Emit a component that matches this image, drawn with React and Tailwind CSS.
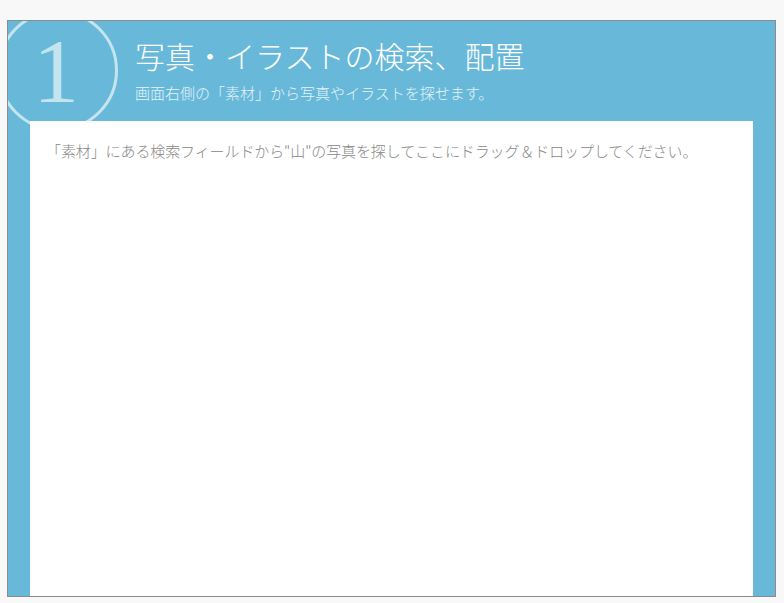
export default function App() {
  const jp = { fontFamily: '"Noto Sans CJK JP", "Noto Sans", sans-serif' };

  return (
    <div className="min-h-[603px] w-[784px] bg-[#f8f8f8] pt-[20px] pl-[7px]" style={jp}>
      {/* Step card */}
      <div className="relative flex h-[577px] w-[769px] flex-col overflow-hidden border border-[#8c8c8c] bg-[#68b9d9]">
        {/* Step number badge */}
        <div className="absolute -left-[11px] -top-[11px] h-[121px] w-[121px] rounded-full border-[3px] border-[#c4e4f0]"></div>
        <div
          className="absolute left-[25px] top-[4px] text-[92px] leading-[92px] text-[#c4e4f0]"
          style={{ fontFamily: '"Liberation Serif", serif' }}
        >
          1
        </div>

        {/* Header */}
        <div className="relative h-[100px] shrink-0 pl-[127px] pt-[19px]">
          <h1 className="text-[30px] font-light leading-[30px] text-white">写真・イラストの検索、配置</h1>
          <p className="mt-[15px] text-[15px] font-light leading-[15px] text-[#e4f2f8]">
            画面右側の「素材」から写真やイラストを探せます。
          </p>
        </div>

        {/* Drop area */}
        <div className="relative mx-[22px] flex-1 bg-white pl-[16px] pt-[20px]">
          <p className="text-[15px] font-light leading-[20px] tracking-[-0.1px] text-[#888888]">
            「素材」にある検索フィールドから"山"の写真を探してここにドラッグ＆ドロップしてください。
          </p>
        </div>
      </div>
    </div>
  );
}
